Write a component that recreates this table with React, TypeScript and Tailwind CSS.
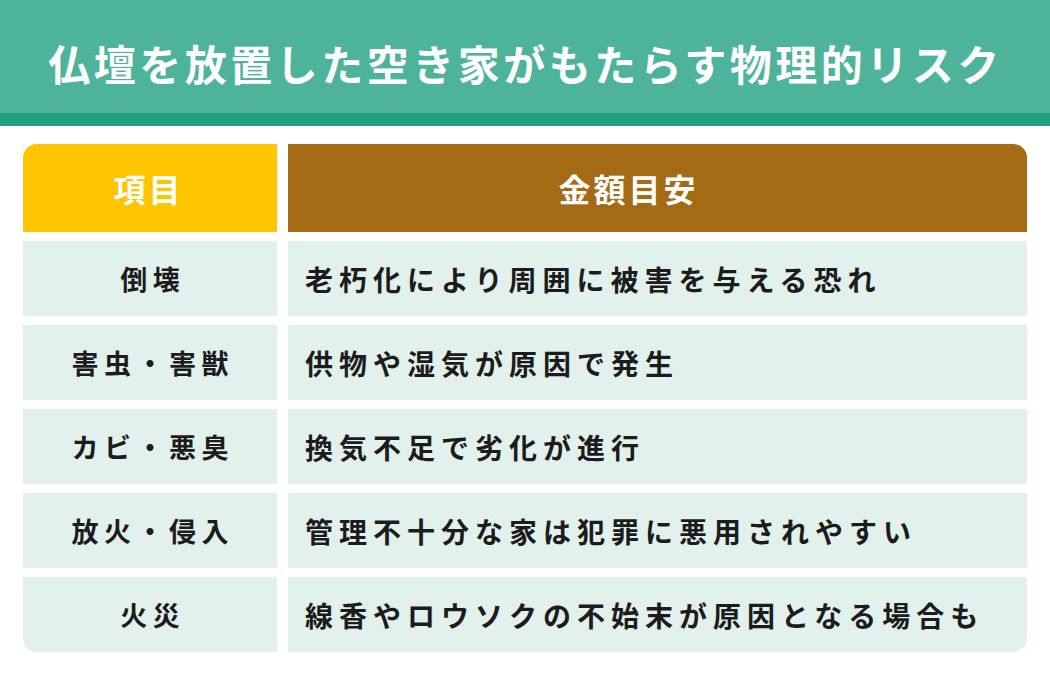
import React from "react";

const rows: [string, string][] = [
  ["倒壊", "老朽化により周囲に被害を与える恐れ"],
  ["害虫・害獣", "供物や湿気が原因で発生"],
  ["カビ・悪臭", "換気不足で劣化が進行"],
  ["放火・侵入", "管理不十分な家は犯罪に悪用されやすい"],
  ["火災", "線香やロウソクの不始末が原因となる場合も"],
];

const font = { fontFamily: '"Noto Sans CJK JP", "Noto Sans", sans-serif' };

export default function App() {
  return (
    <div className="w-[1050px] h-[689px] bg-white overflow-hidden" style={font}>
      <div className="h-[113px] bg-[#4db39b] flex items-center justify-center pt-[13px]">
        <h1 className="text-white font-bold text-[42px] leading-none tracking-[3.5px] pl-[1px]">
          仏壇を放置した空き家がもたらす物理的リスク
        </h1>
      </div>
      <div className="h-[13px] bg-[#1fa07f]" />
      <div className="mt-[18px] ml-[23px] w-[1004px] grid grid-cols-[254px_1fr] gap-x-[11px] gap-y-[9px]">
        <div className="h-[88px] bg-[#ffc500] rounded-tl-[14px] flex items-center justify-center">
          <span className="text-white font-bold text-[32px] leading-none tracking-[3px] pr-[3px]">項目</span>
        </div>
        <div className="h-[88px] bg-[#a46b14] rounded-tr-[14px] flex items-center justify-center pr-[58px]">
          <span className="text-white font-bold text-[32px] leading-none tracking-[3px]">金額目安</span>
        </div>
        {rows.map(([a, b], i) => {
          const last = i === rows.length - 1;
          return (
            <React.Fragment key={a}>
              <div
                className={`h-[75px] bg-[#e2f1ec] flex items-center justify-center ${last ? "rounded-bl-[14px]" : ""}`}
              >
                <span className="text-[#1c1c1c] font-bold text-[27px] leading-none tracking-[5.5px] pl-[5.5px]">{a}</span>
              </div>
              <div
                className={`h-[75px] bg-[#e2f1ec] flex items-center pl-[17px] ${last ? "rounded-br-[14px]" : ""}`}
              >
                <span className="text-[#1c1c1c] font-bold text-[28px] leading-none tracking-[6px]">{b}</span>
              </div>
            </React.Fragment>
          );
        })}
      </div>
    </div>
  );
}
